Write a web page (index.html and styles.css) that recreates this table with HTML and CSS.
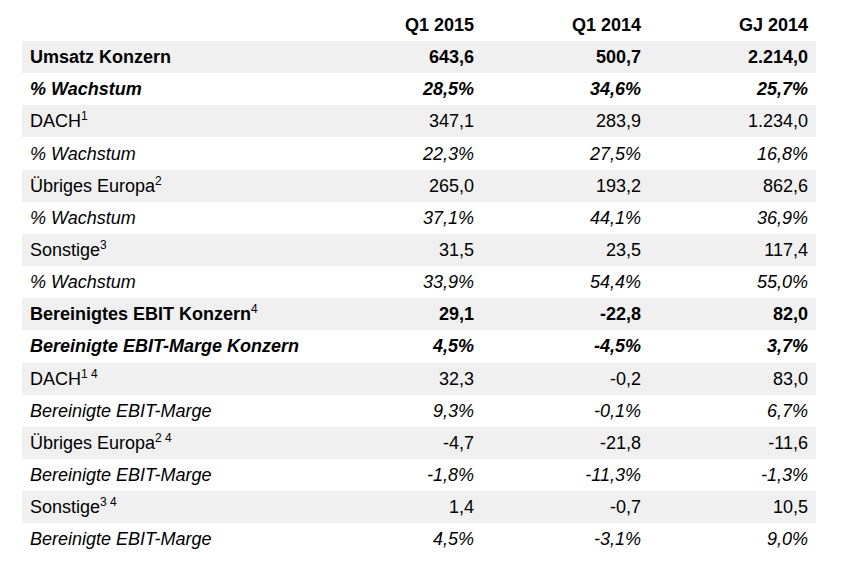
FILE: index.html
```html
<!DOCTYPE html>
<html lang="de">
<head>
<meta charset="utf-8">
<title>Kennzahlen</title>
<link rel="stylesheet" href="styles.css">
</head>
<body>
<div class="page">
<table class="fin">
  <thead>
    <tr class="head">
      <th class="label"></th>
      <th class="c1">Q1 2015</th>
      <th class="c2">Q1 2014</th>
      <th class="c3">GJ 2014</th>
    </tr>
  </thead>
  <tbody>
    <tr class="shade bold"><td class="label">Umsatz Konzern</td><td>643,6</td><td>500,7</td><td>2.214,0</td></tr>
    <tr class="bold ital"><td class="label">% Wachstum</td><td>28,5%</td><td>34,6%</td><td>25,7%</td></tr>
    <tr class="shade"><td class="label">DACH<sup>1</sup></td><td>347,1</td><td>283,9</td><td>1.234,0</td></tr>
    <tr class="ital"><td class="label">% Wachstum</td><td>22,3%</td><td>27,5%</td><td>16,8%</td></tr>
    <tr class="shade"><td class="label">Übriges Europa<sup>2</sup></td><td>265,0</td><td>193,2</td><td>862,6</td></tr>
    <tr class="ital"><td class="label">% Wachstum</td><td>37,1%</td><td>44,1%</td><td>36,9%</td></tr>
    <tr class="shade"><td class="label">Sonstige<sup>3</sup></td><td>31,5</td><td>23,5</td><td>117,4</td></tr>
    <tr class="ital"><td class="label">% Wachstum</td><td>33,9%</td><td>54,4%</td><td>55,0%</td></tr>
    <tr class="shade bold"><td class="label">Bereinigtes EBIT Konzern<sup>4</sup></td><td>29,1</td><td>-22,8</td><td>82,0</td></tr>
    <tr class="bold ital"><td class="label">Bereinigte EBIT-Marge Konzern</td><td>4,5%</td><td>-4,5%</td><td>3,7%</td></tr>
    <tr class="shade"><td class="label">DACH<sup>1 4</sup></td><td>32,3</td><td>-0,2</td><td>83,0</td></tr>
    <tr class="ital"><td class="label">Bereinigte EBIT-Marge</td><td>9,3%</td><td>-0,1%</td><td>6,7%</td></tr>
    <tr class="shade"><td class="label">Übriges Europa<sup>2 4</sup></td><td>-4,7</td><td>-21,8</td><td>-11,6</td></tr>
    <tr class="ital"><td class="label">Bereinigte EBIT-Marge</td><td>-1,8%</td><td>-11,3%</td><td>-1,3%</td></tr>
    <tr class="shade"><td class="label">Sonstige<sup>3 4</sup></td><td>1,4</td><td>-0,7</td><td>10,5</td></tr>
    <tr class="ital"><td class="label">Bereinigte EBIT-Marge</td><td>4,5%</td><td>-3,1%</td><td>9,0%</td></tr>
  </tbody>
</table>
</div>
</body>
</html>
```
FILE: styles.css
```css
html, body {
  margin: 0;
  padding: 0;
  background: #ffffff;
}

.page {
  padding: 9px 0 0 22px;
}

.fin {
  border-collapse: collapse;
  border-spacing: 0;
  table-layout: fixed;
  width: 794px;
  font-family: "Liberation Sans", Arial, sans-serif;
  font-size: 18px;
  color: #000000;
}

.fin th,
.fin td {
  padding: 0 8px 0 0;
  height: 32.16px;
  line-height: 20px;
  text-align: right;
  white-space: nowrap;
  vertical-align: middle;
  box-sizing: border-box;
}

.fin .label {
  width: 294px;
  text-align: left;
  padding-left: 8px;
}

.fin .c1 { width: 166px; }
.fin .c2 { width: 166px; padding-right: 7px; }
.fin .c3 { width: 168px; }

.fin td:nth-child(3) { padding-right: 7px; }

.fin th {
  font-weight: bold;
  height: 32px;
}

.shade td {
  background: #f0f0f0;
}

.bold td { font-weight: bold; }
.ital td { font-style: italic; }

.fin sup {
  font-size: 12px;
  line-height: 0;
  vertical-align: 7px;
  font-weight: normal;
}
```
